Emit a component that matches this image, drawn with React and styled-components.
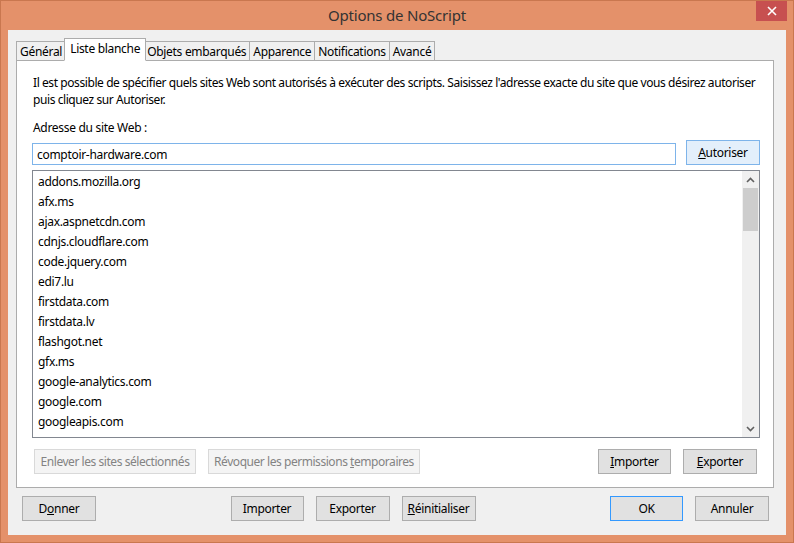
import React from "react";
import styled, { createGlobalStyle } from "styled-components";

const Global = createGlobalStyle`
  html, body { margin: 0; padding: 0; background: #e4916a; }
  body { font-family: "Noto Sans", "Open Sans", sans-serif; font-size: 12px; letter-spacing: -0.3px; color: #000; }
  * { box-sizing: border-box; }
`;

const Win = styled.div`
  width: 794px;
  height: 543px;
  background: #e4916a;
  border: 1px solid #c9774f;
  display: flex;
  flex-direction: column;
`;

const TitleBar = styled.div`
  height: 29px;
  display: flex;
  align-items: center;
  justify-content: center;
  position: relative;
  font-size: 15px;
  letter-spacing: -0.2px;
  color: #333;
  padding-bottom: 1px;
`;

const Close = styled.div`
  position: absolute;
  top: 0;
  right: 6px;
  width: 31px;
  height: 20px;
  background: #c75050;
  display: flex;
  align-items: center;
  justify-content: center;
`;

const Client = styled.div`
  margin: 0 7px 7px 7px;
  flex: 1;
  background: #f0f0f0;
  padding: 8px 12px 14px 8px;
  display: flex;
  flex-direction: column;
`;

const TabStrip = styled.div`
  display: flex;
  align-items: flex-end;
  height: 22px;
  position: relative;
  z-index: 1;
`;

const Tab = styled.div`
  height: ${(p) => (p.$active ? 23 : 20)}px;
  padding: 0 ${(p) => (p.$active ? 5 : 3)}px;
  margin: 0 ${(p) => (p.$active ? -2 : 0)}px -1px;
  border: 1px solid #acacac;
  border-bottom: ${(p) => (p.$active ? "1px solid #fff" : "1px solid #acacac")};
  border-left: ${(p) => (p.$first || p.$active ? "1px solid #acacac" : "none")};
  background: ${(p) => (p.$active ? "#fff" : "#f0f0f0")};
  display: flex;
  align-items: center;
  white-space: nowrap;
  position: relative;
  z-index: ${(p) => (p.$active ? 2 : 0)};
  padding-bottom: ${(p) => (p.$active ? 2 : 0)}px;
`;

const Panel = styled.div`
  background: #fff;
  border: 1px solid #acacac;
  padding: 13px 13px 13px 15px;
  display: flex;
  flex-direction: column;
`;

const Para = styled.p`
  margin: 0 -4px 0 1px;
  line-height: 17px;
  letter-spacing: -0.42px;
`;

const Label = styled.div`
  margin: 11px 0 0 1px;
  line-height: 17px;
`;

const InputRow = styled.div`
  display: flex;
  align-items: flex-start;
  gap: 10px;
  margin-top: 4px;
`;

const Input = styled.div`
  flex: 1;
  height: 22px;
  margin-top: 3px;
  border: 1px solid #7eb4ea;
  padding: 0 4px;
  display: flex;
  align-items: center;
`;

const Button = styled.div`
  width: ${(p) => p.$w || 73}px;
  height: 25px;
  flex: none;
  display: flex;
  align-items: center;
  justify-content: center;
  white-space: nowrap;
  border: 1px solid ${(p) => (p.$disabled ? "#d9d9d9" : p.$focus ? "#3399ff" : p.$hot ? "#7eb4ea" : "#adadad")};
  background: ${(p) => (p.$disabled ? "#f4f4f4" : p.$hot ? "#e3effb" : "#e1e1e1")};
  color: ${(p) => (p.$disabled ? "#838383" : "#000")};
  letter-spacing: ${(p) => (p.$disabled ? "-0.45px" : "-0.3px")};
  margin-left: ${(p) => p.$ml || 0}px;
`;

const U = styled.span`
  text-decoration: underline;
`;

const List = styled.div`
  margin-top: 5px;
  height: 268px;
  border: 1px solid #828790;
  display: flex;
  overflow: hidden;
`;

const Items = styled.div`
  flex: 1;
  padding: 1px 0 0 5px;
  overflow: hidden;
`;

const Item = styled.div`
  height: 20px;
  line-height: 20px;
`;

const Scroll = styled.div`
  width: 17px;
  background: #f0f0f0;
  display: flex;
  flex-direction: column;
`;

const Arrow = styled.div`
  height: 17px;
  display: flex;
  align-items: center;
  justify-content: center;
`;

const Thumb = styled.div`
  height: 43px;
  margin: 0 1px;
  background: #cdcdcd;
`;

const Track = styled.div`
  flex: 1;
`;

const PanelButtons = styled.div`
  display: flex;
  margin-top: 11px;
  padding-left: 2px;
  padding-right: 3px;
`;

const Spacer = styled.div`
  flex: 1;
`;

const BottomRow = styled.div`
  display: flex;
  margin-top: 8px;
  padding-left: 6px;
  padding-right: 5px;
`;

const sites = [
  "addons.mozilla.org",
  "afx.ms",
  "ajax.aspnetcdn.com",
  "cdnjs.cloudflare.com",
  "code.jquery.com",
  "edi7.lu",
  "firstdata.com",
  "firstdata.lv",
  "flashgot.net",
  "gfx.ms",
  "google-analytics.com",
  "google.com",
  "googleapis.com",
];

export default function App() {
  return (
    <>
      <Global />
      <Win>
        <TitleBar>
          Options de NoScript
          <Close>
            <svg width="10" height="10" viewBox="0 0 10 10">
              <path d="M1 1L9 9M9 1L1 9" stroke="#fff" strokeWidth="1.6" />
            </svg>
          </Close>
        </TitleBar>
        <Client>
          <TabStrip>
            <Tab $first>Général</Tab>
            <Tab $active>Liste blanche</Tab>
            <Tab>Objets embarqués</Tab>
            <Tab>Apparence</Tab>
            <Tab>Notifications</Tab>
            <Tab>Avancé</Tab>
          </TabStrip>
          <Panel>
            <Para>
              Il est possible de spécifier quels sites Web sont autorisés à exécuter des scripts. Saisissez l'adresse exacte du site que vous désirez autoriser puis cliquez sur Autoriser.
            </Para>
            <Label>Adresse du site Web :</Label>
            <InputRow>
              <Input>comptoir-hardware.com</Input>
              <Button $hot $w={74}>
                <U>A</U>utoriser
              </Button>
            </InputRow>
            <List>
              <Items>
                {sites.map((s) => (
                  <Item key={s}>{s}</Item>
                ))}
              </Items>
              <Scroll>
                <Arrow>
                  <svg width="9" height="6" viewBox="0 0 9 6">
                    <path d="M1 5L4.5 1.5L8 5" fill="none" stroke="#606060" strokeWidth="1.6" />
                  </svg>
                </Arrow>
                <Thumb />
                <Track />
                <Arrow>
                  <svg width="9" height="6" viewBox="0 0 9 6">
                    <path d="M1 1L4.5 4.5L8 1" fill="none" stroke="#606060" strokeWidth="1.6" />
                  </svg>
                </Arrow>
              </Scroll>
            </List>
            <PanelButtons>
              <Button $disabled $w={162}>Enlever les sites sélectionnés</Button>
              <Button $disabled $w={212} $ml={12}>
                Révoquer les permissions&nbsp;<U>t</U>emporaires
              </Button>
              <Spacer />
              <Button>
                <U>I</U>mporter
              </Button>
              <Button $w={74} $ml={12}>
                <U>E</U>xporter
              </Button>
            </PanelButtons>
          </Panel>
          <BottomRow>
            <Button $w={74}>
              D<U>o</U>nner
            </Button>
            <Spacer />
            <Button>Importer</Button>
            <Button $w={74} $ml={12}>Exporter</Button>
            <Button $w={74} $ml={12}>
              <U>R</U>éinitialiser
            </Button>
            <Spacer />
            <Button $focus>OK</Button>
            <Button $w={74} $ml={12}>Annuler</Button>
          </BottomRow>
        </Client>
      </Win>
    </>
  );
}
